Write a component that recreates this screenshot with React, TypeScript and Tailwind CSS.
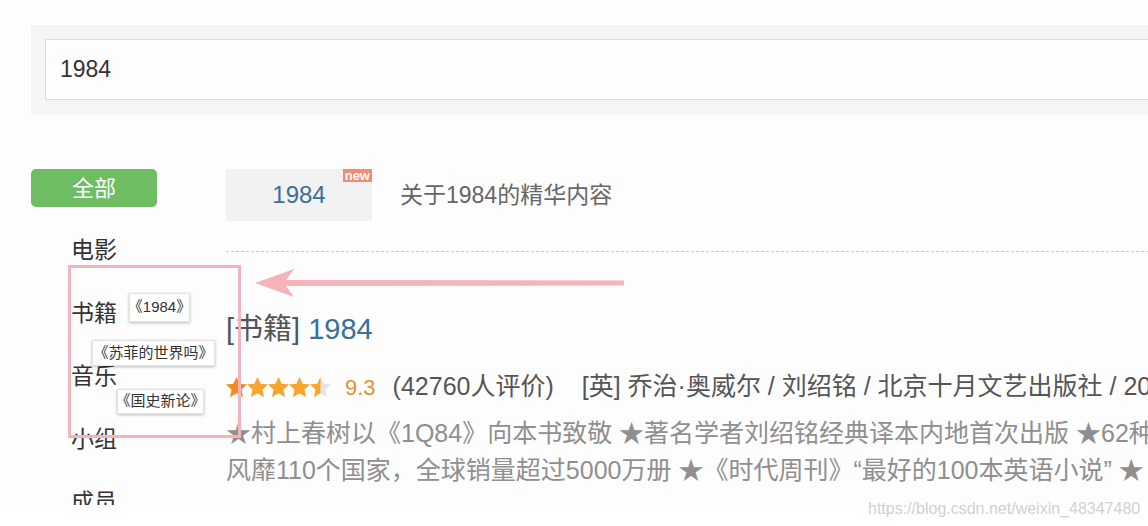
const FONT = "font-['Liberation_Sans','Noto_Sans_CJK_SC',sans-serif]";

const NAV = ["电影", "书籍", "音乐", "小组", "成员"];

function Stars({ value }: { value: number }) {
  const star =
    "M10.5 0L13.56 6.79L20.96 7.6L15.45 12.61L16.97 19.9L10.5 16.2L4.03 19.9L5.55 12.61L0.04 7.6L7.44 6.79Z";
  return (
    <svg width="106" height="21" viewBox="0 0 106 21">
      <defs>
        <clipPath id="half">
          <rect x="84" y="0" width="10.5" height="21" />
        </clipPath>
      </defs>
      {[0, 1, 2, 3, 4].map((i) => (
        <g key={i} transform={`translate(${i * 21} 0)`}>
          <path d={star} fill="#e4e4e4" />
        </g>
      ))}
      {[0, 1, 2, 3, 4].map((i) =>
        i < Math.floor(value) ? (
          <g key={i} transform={`translate(${i * 21} 0)`}>
            <path d={star} fill={i === 0 ? "#f58a1f" : "#f7a52b"} />
          </g>
        ) : null
      )}
      <g clipPath="url(#half)">
        <g transform="translate(84 0)">
          <path d={star} fill="#f7a52b" />
        </g>
      </g>
    </svg>
  );
}

function Tip({ text, className }: { text: string; className: string }) {
  return (
    <div
      className={`absolute flex items-center justify-center bg-white border border-[#e4e4e4] shadow-[0_1px_3px_rgba(0,0,0,0.25)] text-[15px] text-[#333] whitespace-nowrap ${className}`}
    >
      {text}
    </div>
  );
}

export default function App() {
  return (
    <div className={`relative w-[1148px] h-[526px] overflow-hidden bg-white ${FONT}`}>
      <div className="h-[505px] overflow-hidden bg-[#fdfdfd]">
        {/* search */}
        <div className="pt-[25px] pl-[31px]">
          <div className="bg-[#f5f5f5] py-[14px] pl-[14px]">
            <div className="h-[61px] bg-[#fdfdfd] border border-[#dcdcdc] border-r-0 flex items-center pl-[14px] text-[23px] text-[#333]">
              1984
            </div>
          </div>
        </div>

        <div className="flex mt-[55px]">
          {/* sidebar */}
          <div className="w-[195px] pl-[31px] shrink-0">
            <div className="w-[126px] h-[38px] rounded-[5px] bg-[#6fbd62] text-white text-[22px] flex items-center justify-center">
              全部
            </div>
            <div className="mt-[12px] pl-[40px]">
              {NAV.map((n) => (
                <div key={n} className="h-[63px] flex items-center text-[23px] text-[#333]">
                  {n}
                </div>
              ))}
            </div>
          </div>

          {/* main */}
          <div className="flex-1 pl-[31px] whitespace-nowrap">
            <div className="flex items-center">
              <div className="relative w-[146px] h-[52px] bg-[#f2f2f2] flex items-center justify-center text-[24px] text-[#3b6f96]">
                1984
                <span className="absolute top-0 right-0 h-[13px] px-[2px] bg-[#f08c72] text-white text-[13px] leading-[13px] font-bold">
                  new
                </span>
              </div>
              <div className="ml-[28px] text-[23px] text-[#666]">关于1984的精华内容</div>
            </div>
            <div className="mt-[30px] border-t border-dashed border-[#c8c8c8]" />
            <div className="mt-[58px] h-[40px] flex items-center text-[29px]">
              <span className="text-[#555]">[书籍]</span>
              <span className="ml-[8px] text-[#37709a]">1984</span>
            </div>
            <div className="mt-[22px] h-[30px] flex items-center text-[25px] text-[#555]">
              <Stars value={4.5} />
              <span className="ml-[13px] text-[22px] text-[#e0932b]">9.3</span>
              <span className="ml-[17px]">(42760人评价)</span>
              <span className="ml-[28px]">[英] 乔治·奥威尔 / 刘绍铭 / 北京十月文艺出版社 / 2019</span>
            </div>
            <div className="mt-[13px] text-[25px] leading-[37px] text-[#8f8f8f]">
              <div>★村上春树以《1Q84》向本书致敬 ★著名学者刘绍铭经典译本内地首次出版 ★62种语言</div>
              <div>风靡110个国家，全球销量超过5000万册 ★《时代周刊》“最好的100本英语小说” ★</div>
            </div>
          </div>
        </div>
      </div>

      {/* annotations */}
      <div className="absolute left-[68px] top-[265px] w-[173px] h-[173px] border-[3px] border-[#f3b5bd]" />
      <svg className="absolute left-[252px] top-[268px]" width="375" height="30" viewBox="0 0 375 30">
        <path d="M3 15 L42 1 L34 12 L372 12.5 L372 17.5 L34 18 L42 29 Z" fill="#f6b3b8" />
      </svg>
      <Tip text="《1984》" className="left-[129px] top-[293px] w-[61px] h-[29px]" />
      <Tip text="《苏菲的世界吗》" className="left-[92px] top-[340px] w-[123px] h-[26px]" />
      <Tip text="《国史新论》" className="left-[117px] top-[389px] w-[87px] h-[25px]" />

      <div className="absolute left-[868px] top-[497px] text-[16px] text-[#d0d0d0] whitespace-nowrap">
        https://blog.csdn.net/weixin_48347480
      </div>
    </div>
  );
}
